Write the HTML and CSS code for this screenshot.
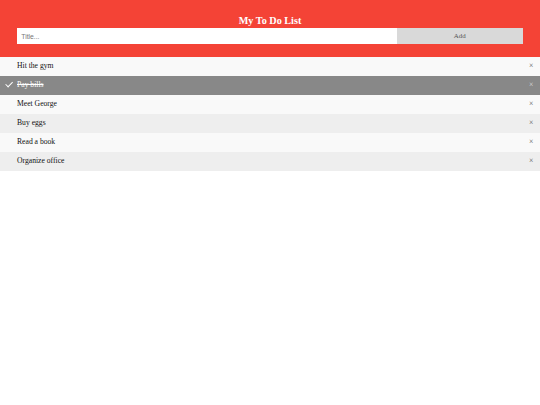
FILE: index.html
```html
<!DOCTYPE html>
<html>
<head>
<meta charset="utf-8">
<link rel="stylesheet" href="styles.css">
</head>
<body>
<div class="header">
  <h2 class="title">My To Do List</h2>
  <div class="entry">
    <input class="title-input" type="text" placeholder="Title...">
    <span class="add-btn">Add</span>
  </div>
</div>
<ul class="todo-list">
  <li class="item">Hit the gym<span class="close">×</span></li>
  <li class="item checked">Pay bills<span class="close">×</span></li>
  <li class="item">Meet George<span class="close">×</span></li>
  <li class="item">Buy eggs<span class="close">×</span></li>
  <li class="item">Read a book<span class="close">×</span></li>
  <li class="item">Organize office<span class="close">×</span></li>
</ul>
</body>
</html>
```
FILE: styles.css
```css
body {
  margin: 0;
  font-family: "Liberation Serif", "Times New Roman", serif;
  background: #fff;
}
.header {
  background-color: #f44336;
  padding: 12.6px 17px;
  color: #fff;
  text-align: center;
}
.title {
  margin: 2.1px 0;
  font-size: 10.2px;
  font-weight: bold;
  line-height: 11.4px;
}
.entry {
  display: flex;
}
.title-input {
  margin: 0;
  border: none;
  border-radius: 0;
  width: 75%;
  padding: 4.25px;
  font-family: "Liberation Sans", Arial, sans-serif;
  font-size: 6.8px;
  line-height: 7.6px;
  height: 16px;
  box-sizing: border-box;
  outline: none;
  background: #fff;
}
.title-input::placeholder {
  color: #777;
}
.add-btn {
  width: 25%;
  padding: 4.25px;
  box-sizing: border-box;
  height: 16px;
  background: #d9d9d9;
  color: #555;
  text-align: center;
  font-size: 6.9px;
  line-height: 7.6px;
}
.todo-list {
  margin: 0;
  padding: 0;
}
.item {
  position: relative;
  list-style: none;
  padding: 5.6px 3.4px 4.6px 17px;
  background: #eee;
  font-size: 7.65px;
  line-height: 8.8px;
  color: #111;
}
.item:nth-child(odd) {
  background: #f9f9f9;
}
.item.checked {
  background: #888;
  color: #fff;
  text-decoration: line-through;
}
.item.checked::before {
  content: "";
  position: absolute;
  border-color: #fff;
  border-style: solid;
  border-width: 0 1px 1px 0;
  top: 4.4px;
  left: 6.8px;
  transform: rotate(45deg);
  height: 6.4px;
  width: 3px;
}
.close {
  position: absolute;
  right: 0;
  top: 0;
  padding: 5.6px 6.8px 4.6px;
  color: #555;
  text-decoration: none;
}
.item.checked .close {
  color: #ddd;
}
```
